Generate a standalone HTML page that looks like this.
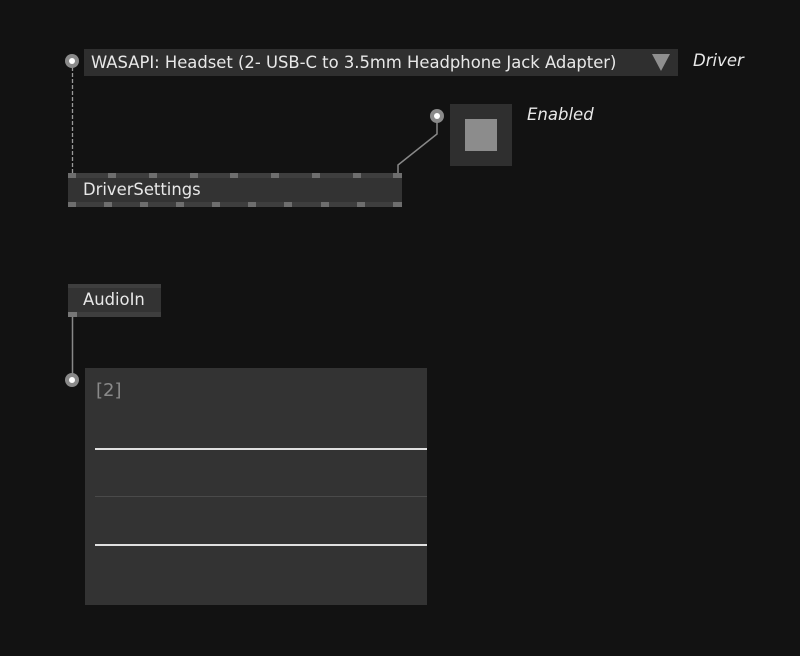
<!DOCTYPE html>
<html><head><style>
body{margin:0;width:800px;height:656px;background:#121212;position:relative;overflow:hidden;font-family:"DejaVu Sans","Liberation Sans",sans-serif;}
.a{position:absolute}
.pin{position:absolute;width:14px;height:14px;border-radius:50%;background:#8a8a8a}
.pin::after{content:"";position:absolute;left:4px;top:4px;width:6px;height:6px;border-radius:50%;background:#fff}
.lbl{position:absolute;color:#e8e8e8;font-style:italic;font-size:16.5px}
.p{position:absolute;width:8px;height:5px;background:#6e6e6e}
</style></head><body>
<svg class="a" style="left:0;top:0" width="800" height="656">
<line x1="72.5" y1="67" x2="72.5" y2="173" stroke="#999" stroke-width="1.3" stroke-dasharray="4,2"/>
<polyline points="437,122 437,134 398,165 398,173" fill="none" stroke="#888" stroke-width="1.5"/>
<line x1="72.5" y1="317" x2="72.5" y2="376" stroke="#888" stroke-width="1.5"/>
</svg>
<div class="pin" style="left:65px;top:54px"></div>
<div class="a" style="left:84px;top:49px;width:594px;height:27px;background:#2f2f2f;color:#e8e8e8;font-size:16.4px;line-height:27px;padding-left:7px;box-sizing:border-box">WASAPI: Headset (2- USB-C to 3.5mm Headphone Jack Adapter)</div>
<svg class="a" style="left:651px;top:53px" width="20" height="20"><polygon points="1,1 19,1 10,18" fill="#8f8f8f"/></svg>
<div class="lbl" style="left:693px;top:51px">Driver</div>
<div class="pin" style="left:430px;top:109px"></div>
<div class="a" style="left:450px;top:104px;width:62px;height:62px;background:#2f2f2f"></div>
<div class="a" style="left:465px;top:119px;width:32px;height:32px;background:#8c8c8c"></div>
<div class="lbl" style="left:527px;top:105px">Enabled</div>
<div class="a" style="left:68px;top:173px;width:334px;height:34px;background:#333"></div>
<div class="a" style="left:68px;top:173px;width:334px;height:5px;background:#3e3e3e"></div>
<div class="a" style="left:68px;top:202px;width:334px;height:5px;background:#3e3e3e"></div>
<div class="a" style="left:83px;top:180px;color:#e8e8e8;font-size:16.4px">DriverSettings</div>
<div class="a" style="left:68px;top:284px;width:93px;height:33px;background:#333"></div>
<div class="a" style="left:68px;top:284px;width:93px;height:4px;background:#3e3e3e"></div>
<div class="a" style="left:68px;top:312px;width:93px;height:5px;background:#3e3e3e"></div>
<div class="a" style="left:68px;top:312px;width:9px;height:5px;background:#777"></div>
<div class="a" style="left:83px;top:290px;color:#e8e8e8;font-size:16.4px">AudioIn</div>
<div class="pin" style="left:65px;top:373px"></div>
<div class="a" style="left:85px;top:368px;width:342px;height:237px;background:#333"></div>
<div class="a" style="left:96px;top:380px;color:#8a8a8a;font-size:18px">[2]</div>
<div class="a" style="left:95px;top:448px;width:332px;height:2px;background:#e0e0e0"></div>
<div class="a" style="left:95px;top:496px;width:332px;height:1px;background:#4a4a4a"></div>
<div class="a" style="left:95px;top:544px;width:332px;height:2px;background:#e0e0e0"></div>
<div class="p" style="left:68px;top:173px"></div>
<div class="p" style="left:108px;top:173px"></div>
<div class="p" style="left:149px;top:173px"></div>
<div class="p" style="left:190px;top:173px"></div>
<div class="p" style="left:230px;top:173px"></div>
<div class="p" style="left:271px;top:173px"></div>
<div class="p" style="left:312px;top:173px"></div>
<div class="p" style="left:353px;top:173px"></div>
<div class="p" style="left:393px;top:173px;width:9px"></div>
<div class="p" style="left:68px;top:202px"></div>
<div class="p" style="left:104px;top:202px"></div>
<div class="p" style="left:140px;top:202px"></div>
<div class="p" style="left:176px;top:202px"></div>
<div class="p" style="left:212px;top:202px"></div>
<div class="p" style="left:248px;top:202px"></div>
<div class="p" style="left:284px;top:202px"></div>
<div class="p" style="left:321px;top:202px"></div>
<div class="p" style="left:357px;top:202px"></div>
<div class="p" style="left:393px;top:202px;width:9px"></div>
</body></html>
